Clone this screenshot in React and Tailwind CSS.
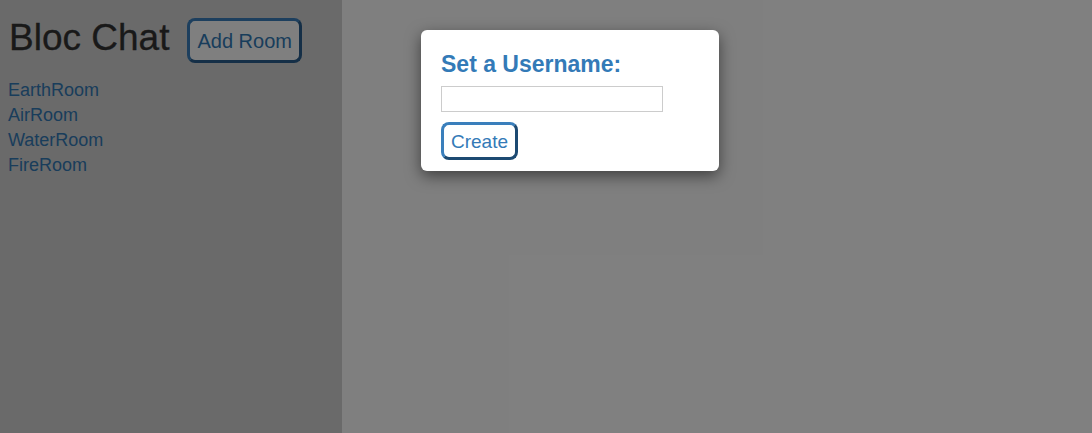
import React, { useState } from 'react';

const rooms = ['EarthRoom', 'AirRoom', 'WaterRoom', 'FireRoom'];

export default function App() {
  const [username, setUsername] = useState('');

  return (
    <div className="relative h-screen w-full overflow-hidden bg-white font-['Liberation_Sans',Arial,sans-serif]">
      <div className="flex h-full">
        {/* Sidebar */}
        <aside className="w-[342px] h-full bg-[#d4d4d4] pl-[9px] pt-[18px]">
          <div className="flex items-start">
            <h1 className="mt-[2px] text-[37px] leading-[36px] font-normal text-[#333] [-webkit-text-stroke:0.3px_#333]">Bloc Chat</h1>
            <button className="ml-[18px] h-[45px] px-[7px] bg-white rounded-[8px] border-[3px] border-t-[#3a7fbc] border-l-[#3a7fbc] border-b-[#2a5f8e] border-r-[#2a5f8e] text-[20px] leading-none text-[#337ab7]">
              Add Room
            </button>
          </div>
          <ul className="mt-[15px] -ml-[1px]">
            {rooms.map((room) => (
              <li key={room} className="text-[18px] leading-[25px] text-[#337ab7]">
                <a href="#">{room}</a>
              </li>
            ))}
          </ul>
        </aside>
        <main className="flex-1 h-full bg-white"></main>
      </div>

      {/* Backdrop */}
      <div className="absolute inset-0 bg-black/50"></div>

      {/* Modal */}
      <div className="absolute left-[421px] top-[30px] w-[298px] h-[141px] bg-white rounded-[6px] shadow-[0_5px_15px_rgba(0,0,0,0.5)] px-[20px] pt-[23px]">
        <h3 className="text-[23px] leading-[23px] font-bold text-[#337ab7]">Set a Username:</h3>
        <input
          value={username}
          onChange={(e) => setUsername(e.target.value)}
          className="block mt-[10px] w-[222px] h-[26px] border border-[#cccccc] bg-white outline-none px-1 text-sm"
        />
        <button className="mt-[10px] h-[38px] px-[7px] bg-white rounded-[8px] border-[3px] border-t-[#3a7fbc] border-l-[#3a7fbc] border-b-[#1d4a72] border-r-[#1d4a72] text-[19px] leading-none text-[#337ab7]">
          Create
        </button>
      </div>
    </div>
  );
}
